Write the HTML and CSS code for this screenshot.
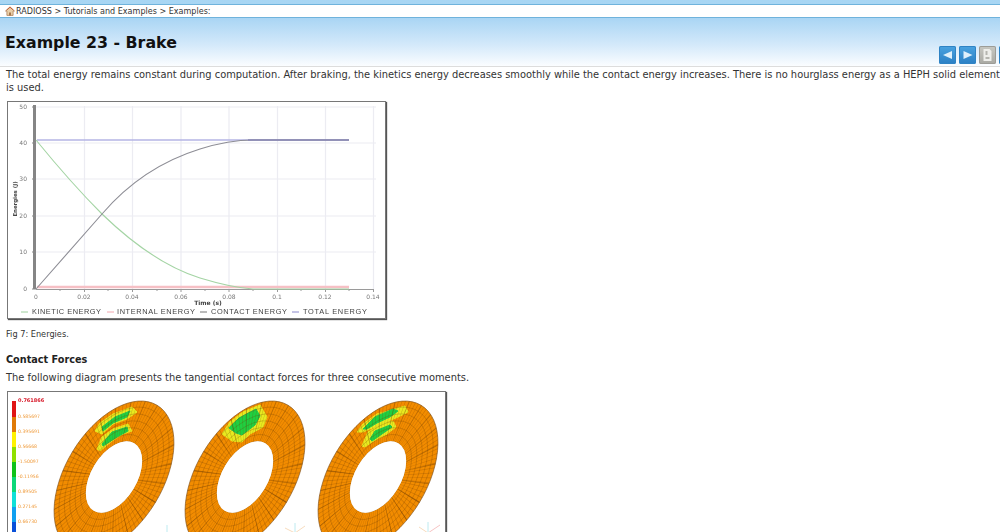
FILE: index.html
```html
<!DOCTYPE html>
<html lang="en">
<head>
<meta charset="utf-8">
<title>Example 23 - Brake</title>
<link rel="stylesheet" href="styles.css">
</head>
<body>
<header class="banner">
  <nav class="crumbs">
    <svg class="home" viewBox="0 0 10 10" width="10" height="10"><path d="M5 .8 .5 5h1.400V9.400h6.200V5h1.400z" fill="#e9cfa8" stroke="#a5744a" stroke-width=".7"/><path d="M4 9.400V6.400h2v3" fill="#a8784c"/><path d="M1.600 4.200 5 1.200l3.400 3" fill="none" stroke="#c45a34" stroke-width=".9"/></svg>
    <span>RADIOSS &gt; Tutorials and Examples &gt; Examples:</span>
  </nav>
  <div class="title-row">
    <h1>Example 23 - Brake</h1>
    <div class="tools">
      <span class="tool"><svg viewBox="0 0 17 18" width="17" height="18"><path d="M13 5v8L4 9z" fill="#dff0fb"/></svg></span>
      <span class="tool"><svg viewBox="0 0 17 18" width="17" height="18"><path d="M4.500 5v8L13.500 9z" fill="#dff0fb"/></svg></span>
      <span class="tool tool-off"><svg viewBox="0 0 17 18" width="17" height="18"><path d="M4.500 3h6l2 2v10h-8z" fill="#eeeeea"/><path d="M6.500 5h2v4h-2zM6.500 11h4v2h-4z" fill="#b5b5af"/></svg></span>
      <span class="tool tool-cut"></span>
    </div>
  </div>
</header>
<main class="content">
  <p class="para">The total energy remains constant during computation. After braking, the kinetics energy decreases smoothly while the contact energy increases. There is no hourglass energy as a HEPH solid element is used.</p>
  <figure class="shot shot-chart">
    <svg class="chart" viewBox="0 0 377 216" width="377" height="216">
      <g stroke="#ececf2" stroke-width="1.2" fill="none">
        <path d="M76.500 4V187M124.500 4V187M173 4V187M221 4V187M269.500 4V187M317.500 4V187M365.500 4V187"/>
        <path d="M28 5H368M28 41H368M28 77H368M28 114H368M28 150H368"/>
      </g>
      <path d="M26.500 3V187" class="axis-band"/>
      <path d="M24 5H28M24 41H28M24 77H28M24 114H28M24 150H28M24 187H28" stroke="#888" stroke-width="1" fill="none"/>
      <path d="M28 187.500H366M76.500 187v3M124.500 187v3M173 187v3M221 187v3M269.500 187v3M317.500 187v3M365.500 187v3M52 187v2M100 187v2M149 187v2M197 187v2M245 187v2M293 187v2M341 187v2" stroke="#9a9a9a" stroke-width="1" fill="none"/>
      <path d="M29 38H341" stroke="#b5b5e4" stroke-width="1.6" fill="none"/>
      <path d="M29 185H341" stroke="#f6c0c5" stroke-width="2.600" fill="none"/>
      <path d="M28 38C50 65 72 90 94 112C125 142 160 166 192 176C215 183 230 186 245 187H341" stroke="#a4d4a4" stroke-width="1.100" fill="none"/>
      <path d="M28 187L94 112C118 84 150 60 192 47C208 42 225 38 245 38H341" stroke="#8d8d95" stroke-width="1.100" fill="none"/>
      <path d="M240 38H341" stroke="#8a88b4" stroke-width="1.400" fill="none"/>
      <g class="tick-y" text-anchor="end">
        <text x="19" y="7">50</text><text x="19" y="43">40</text><text x="19" y="79">30</text><text x="19" y="116">20</text><text x="19" y="152">10</text><text x="19" y="189">0</text>
      </g>
      <text class="axis-y" transform="translate(9 97) rotate(-90)" text-anchor="middle">Energies (J)</text>
      <g class="tick-x" text-anchor="middle">
        <text x="28" y="197">0</text><text x="76" y="197">0.02</text><text x="124" y="197">0.04</text><text x="173" y="197">0.06</text><text x="221" y="197">0.08</text><text x="269" y="197">0.1</text><text x="317" y="197">0.12</text><text x="365" y="197">0.14</text>
      </g>
      <text class="axis-x" x="200" y="203" text-anchor="middle">Time (s)</text>
      <path d="M13 210h7" stroke="#9ed09e"/><path d="M99 210h7" stroke="#f2a8b0"/><path d="M192 210h7" stroke="#777"/><path d="M284 210h7" stroke="#8a88cc"/>
      <g class="legend">
        <text x="24" y="212" textLength="69">KINETIC ENERGY</text><text x="109" y="212" textLength="78">INTERNAL ENERGY</text><text x="203" y="212" textLength="76">CONTACT ENERGY</text><text x="295" y="212" textLength="64">TOTAL ENERGY</text>
      </g>
    </svg>
  </figure>
  <p class="caption">Fig 7: Energies.</p>
  <h2>Contact Forces</h2>
  <p class="para para-tight">The following diagram presents the tangential contact forces for three consecutive moments.</p>
  <figure class="shot shot-disks">
    <svg class="disks" viewBox="0 0 437 160" width="437" height="160">
      <defs>
        <g id="ring">
          <circle r="73.500" class="ring-fill"/>
        </g>
        <g id="mesh">
          <circle r="73.500" class="radial-fine"/>
          <circle r="73.500" class="radial-bold"/>
          <g class="hoops"><circle r="47"/><circle r="56"/><circle r="65"/><circle r="74"/><circle r="83"/><circle r="92"/></g>
          <circle r="100" class="edge"/>
        </g>
      </defs>
      <g class="scale">
        <rect x="4" y="9" width="4" height="16" fill="#e01414"/><rect x="4" y="25" width="4" height="15" fill="#e07a06"/><rect x="4" y="40" width="4" height="15" fill="#fff200"/><rect x="4" y="55" width="4" height="15" fill="#8fe000"/><rect x="4" y="70" width="4" height="15" fill="#0fc21a"/><rect x="4" y="85" width="4" height="15" fill="#0cd878"/><rect x="4" y="100" width="4" height="15" fill="#10e0d8"/><rect x="4" y="115" width="4" height="15" fill="#10a0f0"/><rect x="4" y="130" width="4" height="15" fill="#0a50d8"/>
        <text class="scale-top" x="10" y="10">0.761866</text>
        <g class="scale-label"><text x="10" y="26">0.585697</text><text x="10" y="41">0.395691</text><text x="10" y="56">0.56668</text><text x="10" y="71">-1.50097</text><text x="10" y="86">-0.11956</text><text x="10" y="101">0.89505</text><text x="10" y="116">0.27145</text><text x="10" y="131">0.66730</text></g>
      </g>
      <g transform="translate(106 85)"><g transform="rotate(31) scale(.486 .837)"><use href="#ring"/></g></g>
      <g transform="translate(237 85)"><g transform="rotate(31) scale(.486 .837)"><use href="#ring"/></g></g>
      <g transform="translate(370 85)"><g transform="rotate(31) scale(.486 .837)"><use href="#ring"/></g></g>
      <g class="hot-y">
        <path d="M87 39L92 31L105 22L124 15L129 20L119 27L105 32L94 42Z"/>
        <path d="M89 57L94 45L105 37L120 32L124 39L115 42L104 49L92 59Z"/>
        <path d="M214 42L222 30L235 20L252 13L259 25L255 35L242 42L234 50L224 49Z"/>
        <path d="M349 40L355 32L369 22L397 14L400 20L390 25L374 32L355 40Z"/>
        <path d="M354 54L360 40L374 32L385 29L388 35L379 42L364 50L357 55Z"/>
      </g>
      <g class="hot-g">
        <path d="M94 35L107 25L122 19L119 25L105 31L95 39Z"/>
        <path d="M94 52L104 40L119 35L120 39L109 45L95 54Z"/>
        <path d="M221 36L231 26L248 17L252 24L247 33L234 43L228 41Z"/>
        <path d="M355 37L367 25L385 17L390 19L382 25L369 31L359 37Z"/>
        <path d="M362 47L367 39L382 33L384 35L374 42L364 49Z"/>
      </g>
      <g transform="translate(106 85)"><g transform="rotate(31) scale(.486 .837)"><use href="#mesh"/></g></g>
      <g transform="translate(237 85)"><g transform="rotate(31) scale(.486 .837)"><use href="#mesh"/></g></g>
      <g transform="translate(370 85)"><g transform="rotate(31) scale(.486 .837)"><use href="#mesh"/></g></g>
      <g fill="#fff">
        <g transform="translate(106 85)"><ellipse rx="22.800" ry="39.300" transform="rotate(31)"/></g>
        <g transform="translate(237 85)"><ellipse rx="22.800" ry="39.300" transform="rotate(31)"/></g>
        <g transform="translate(370 85)"><ellipse rx="22.800" ry="39.300" transform="rotate(31)"/></g>
      </g>
      <g class="triad">
        <path d="M159 141V133" stroke="#a8e4ec"/>
        <path d="M287 141V131" stroke="#a8e4ec"/><path d="M287 141L277 136M287 141L297 134" stroke="#f5d0a8"/>
        <path d="M420 141V130" stroke="#a8e4ec"/><path d="M420 141L411 135" stroke="#f5d0a8"/><path d="M420 141L432 133" stroke="#f2b0b0"/>
      </g>
    </svg>
  </figure>
</main>
</body>
</html>
```
FILE: styles.css
```css
html, body {
  margin: 0;
  padding: 0;
  height: 532px;
  overflow: hidden;
  background: #fff;
  color: #222;
  font-family: "DejaVu Sans", Verdana, sans-serif;
}
.banner {
  height: 62px;
  padding-top: 4px;
  background: linear-gradient(#a8d6f3 0, #a9d5f4 18px, #d4e9fa 45px, #fbfdff 66px);
  border-bottom: 1px solid #dddddd;
  display: flex;
  flex-direction: column;
}
.crumbs {
  height: 12px;
  flex: none;
  background: #fff;
  border-top: 1px solid #6fb3dc;
  border-bottom: 1px solid #6fb3dc;
  padding-left: 5px;
  display: flex;
  align-items: center;
  gap: 1px;
  font-size: 8.05px;
  color: #333;
  white-space: nowrap;
}
.home { flex: none; }
.title-row {
  flex: 1;
  display: flex;
  justify-content: space-between;
  position: relative;
  padding-left: 5px;
}
h1 {
  margin: 0;
  padding-top: 15px;
  font-size: 15.8px;
  line-height: 20px;
  font-weight: bold;
  color: #111;
}
.tools {
  position: absolute;
  right: -4px;
  bottom: 2px;
  display: flex;
  gap: 3px;
}
.tool {
  width: 17px;
  height: 18px;
  border-radius: 2px;
  background: linear-gradient(#4aa3e0, #2b7fc4);
  box-shadow: inset 0 0 0 1px #2f83c4;
  display: block;
}
.tool svg { display: block; }
.tool-off {
  background: linear-gradient(#c8c8c2, #a9a9a3);
  box-shadow: inset 0 0 0 1px #9c9c97;
}
.tool-cut { width: 5px; }
.content { padding: 0 0 0 6px; }
.para {
  margin: 0;
  padding-top: 1px;
  width: 996px;
  font-size: 9.88px;
  line-height: 13px;
  color: #333;
}
.para-tight { padding-top: 5px; width: auto; }
.shot {
  margin: 0 0 0 1px;
  background: #fff;
  border: 1px solid #777;
  box-shadow: 1px 1px 1px #555;
  filter: blur(.25px);
}
.shot-chart { width: 377px; height: 216px; margin-top: 7px; }
.shot-disks { width: 437px; height: 160px; margin-top: 7px; }
.chart, .disks { display: block; }
.caption {
  margin: 10px 0 0;
  font-size: 8.2px;
  line-height: 10px;
  color: #333;
}
h2 {
  margin: 14px 0 0;
  font-size: 9.7px;
  line-height: 13px;
  font-weight: bold;
  color: #222;
}
.chart text { font-family: "DejaVu Sans", Verdana, sans-serif; }
.axis-band { fill: none; stroke: #858585; stroke-width: 3; }
.tick-y text, .tick-x text { font-size: 6px; fill: #777; }
.axis-y, .axis-x { font-weight: bold; fill: #444; }
.axis-y { font-size: 5.4px; }
.axis-x { font-size: 6px; }
.chart .legend text { font-family: "Liberation Sans", Arial, sans-serif; font-size: 7.4px; fill: #444; }
.ring-fill { fill: none; stroke: #f28c00; stroke-width: 53; }
.radial-fine { fill: none; stroke: rgba(125, 65, 0, .32); stroke-width: 53; stroke-dasharray: .8 4; }
.radial-bold { fill: none; stroke: rgba(90, 50, 0, .42); stroke-width: 53; stroke-dasharray: .9 18.34; }
.hoops circle { fill: none; stroke: rgba(110, 60, 0, .5); stroke-width: .7; }
.edge { fill: none; stroke: #80501c; stroke-width: .9; }
.hot-y path { fill: #e8ea20; stroke: #e8ea20; stroke-width: 1; stroke-linejoin: round; }
.hot-g path { fill: #1fd040; stroke: #20cc50; stroke-width: 1; stroke-linejoin: round; }
.scale text { font-family: "DejaVu Sans", Verdana, sans-serif; }
.scale-top { font-size: 5px; font-weight: bold; fill: #d81a2a; }
.scale-label text { font-size: 4.6px; fill: #ef9a3a; }
.triad { opacity: .75; }
.triad path { fill: none; stroke-width: 1; }
```
